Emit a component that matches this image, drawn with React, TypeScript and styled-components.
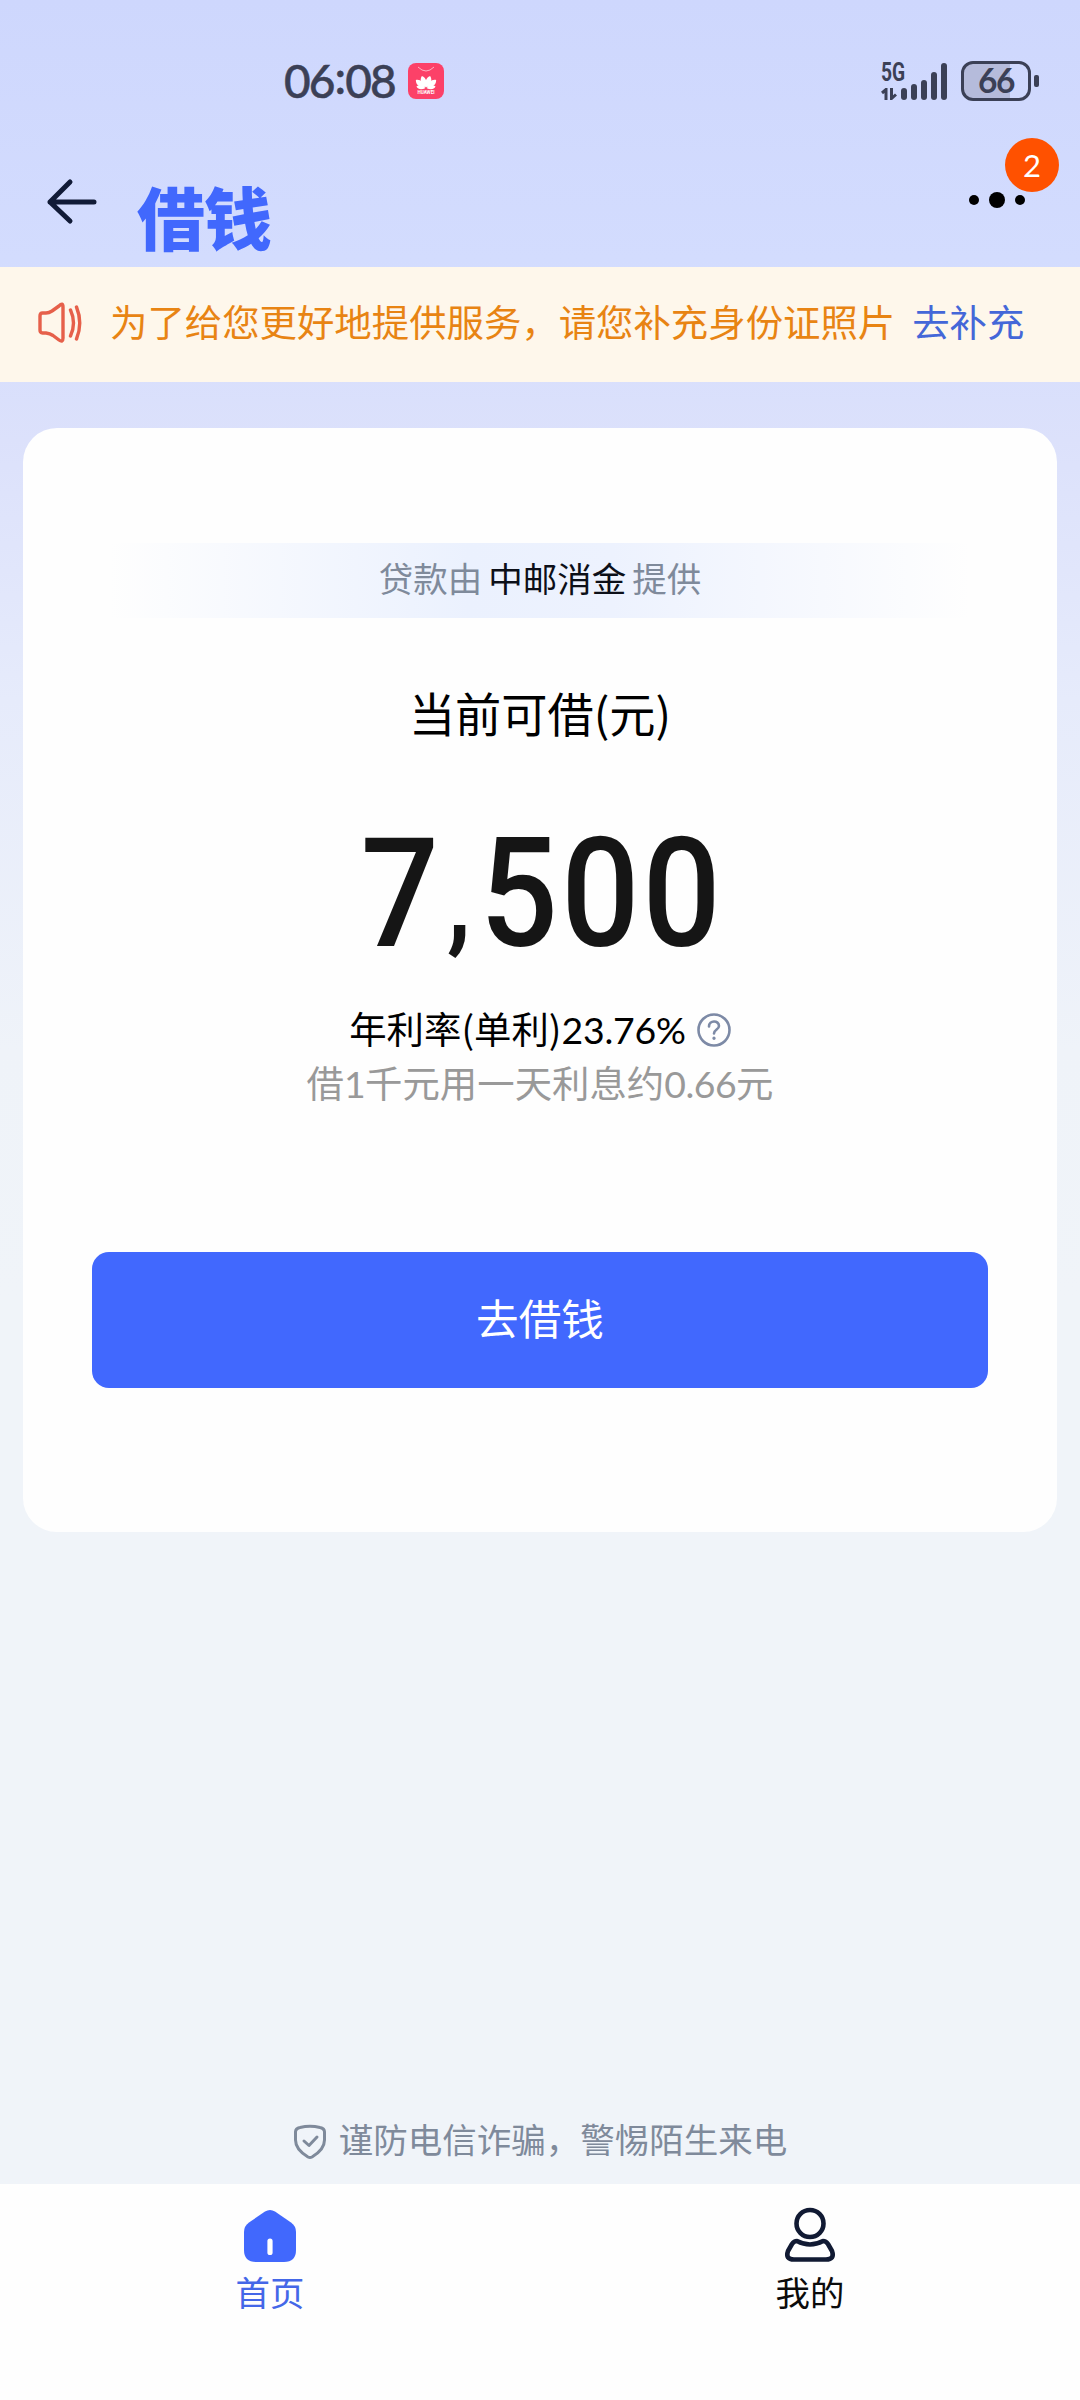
import React from 'react';
import styled, { createGlobalStyle } from 'styled-components';

const Global = createGlobalStyle`
  * { box-sizing: border-box; }
  body { margin: 0; background: #f0f4f9; }
`;

const Screen = styled.div`
  width: 1080px;
  height: 2400px;
  display: flex;
  flex-direction: column;
  overflow: hidden;
  background: linear-gradient(180deg, #ced7fd 0, #d3dcfe 260px, #dce1fb 440px, #e6ebfb 700px, #eff3f9 1050px, #f0f4f9 1300px);
  font-family: "Noto Sans CJK SC", sans-serif;
  color: #000;
`;

const StatusBar = styled.header`
  height: 160px;
  display: flex;
  align-items: center;
  justify-content: space-between;
  padding: 1px 41px 0 284px;
  color: #3b4056;
`;

const StatusGroup = styled.div<{ $gap: number }>`
  display: flex;
  align-items: center;
  gap: ${(p) => p.$gap}px;
`;

const Clock = styled.span`
  width: 112px;
  font: 500 46px/60px Lato, sans-serif;
  letter-spacing: -1.9px;
  white-space: nowrap;
  -webkit-text-stroke: 0.5px #3b4056;
`;

const Colon = styled.span`
  margin: 0 1px;
  vertical-align: 4px;
  line-height: 1;
`;

const Network = styled.div`
  display: flex;
  align-items: flex-end;
  height: 38px;
`;

const NetworkLabel = styled.div`
  display: flex;
  flex-direction: column;
  width: 20px;
  height: 37px;
  justify-content: space-between;
`;

const Generation = styled.span`
  font: 700 25px/20px Roboto, sans-serif;
  transform: scaleX(0.77);
  transform-origin: left;
`;

const Bars = styled.div`
  display: flex;
  align-items: flex-end;
  gap: 4px;
`;

const Bar = styled.i<{ $h: number }>`
  width: 6px;
  height: ${(p) => p.$h}px;
  border-radius: 3px;
  background: #3b4056;
`;

const Battery = styled.div`
  display: flex;
  align-items: center;
  gap: 3px;
`;

const BatteryShell = styled.div`
  width: 70px;
  height: 40px;
  display: flex;
  align-items: center;
  justify-content: center;
  padding-bottom: 1px;
  border: 3px solid #3b4056;
  border-radius: 12px;
  background: linear-gradient(90deg, #b5bbdb 0 46px, transparent 46px);
  font: 700 33.5px/34px Lato, sans-serif;
  letter-spacing: -1.4px;
`;

const BatteryTip = styled.i`
  width: 5px;
  height: 12px;
  border-radius: 2px;
  background: #3b4056;
`;

const NavBar = styled.nav`
  height: 107px;
  display: flex;
  align-items: flex-start;
  padding: 0 54px 0 46px;
`;

const BackIcon = styled.svg`
  margin-top: 18px;
  flex: none;
`;

const Title = styled.h1`
  margin: 11px 0 0 39px;
  font-size: 68px;
  line-height: 90px;
  font-weight: 900;
  letter-spacing: -1px;
  color: #4168fd;
`;

const More = styled.div`
  position: relative;
  display: flex;
  align-items: center;
  gap: 10px;
  height: 16px;
  margin: 32px -20px 0 auto;
  padding-right: 21px;
`;

const Dot = styled.i<{ $size: number }>`
  width: ${(p) => p.$size}px;
  height: ${(p) => p.$size}px;
  border-radius: 50%;
  background: #000;
`;

const Badge = styled.span`
  position: absolute;
  right: -13px;
  bottom: 16px;
  width: 54px;
  height: 54px;
  border-radius: 50%;
  background: #ff5100;
  color: #fff;
  text-align: center;
  font: 400 31px/54px Lato, sans-serif;
`;

const Notice = styled.section`
  height: 115px;
  display: flex;
  align-items: center;
  padding: 0 0 7px 38px;
  background: #fef7eb;
  font-size: 37.4px;
  line-height: 56px;
  white-space: nowrap;
`;

const NoticeIcon = styled.svg`
  margin-top: 3px;
`;

const NoticeText = styled.span`
  margin-left: 28px;
  color: #e88413;
`;

const NoticeLink = styled.a`
  margin-left: 17px;
  color: #4467d8;
`;

const Card = styled.main`
  height: 1104px;
  margin: 46px 23px 0;
  padding: 115px 69px 0;
  display: flex;
  flex-direction: column;
  align-items: center;
  border-radius: 34px;
  background: #fefefe;
`;

const Provider = styled.div`
  width: 100%;
  height: 75px;
  display: flex;
  justify-content: center;
  gap: 6px;
  font-size: 34.5px;
  line-height: 69px;
  color: #7f8a9b;
  background: linear-gradient(90deg, rgba(235, 241, 254, 0) 2%, #ebf1fe 42%, #edf2fe 58%, rgba(235, 241, 254, 0) 98%);
`;

const ProviderName = styled.span`
  color: #0c0f18;
`;

const AmountLabel = styled.h2`
  margin: 61px 0 0;
  font-size: 46.2px;
  line-height: 66px;
  font-weight: 400;
`;

const Amount = styled.div`
  margin-top: 82px;
  height: 134px;
  padding-left: 6px;
  font: 500 152px/134px Roboto, sans-serif;
  letter-spacing: 3.6px;
  color: #151515;
  transform: scaleX(0.905);
`;

const Comma = styled.span`
  margin: 0 6px 0 5px;
  font-size: 120px;
  line-height: 1;
  vertical-align: 7px;
`;

const Rate = styled.div`
  height: 56px;
  display: flex;
  align-items: center;
  gap: 11px;
  margin-top: 39px;
  font-size: 37.4px;
  line-height: 56px;
`;

const HelpIcon = styled.svg`
  margin-top: 3px;
`;

const Num = styled.span<{ $tight?: boolean }>`
  font-family: Lato, sans-serif;
  line-height: 1;
  letter-spacing: ${(p) => (p.$tight ? -0.5 : -0.2)}px;
`;

const Hint = styled.p`
  margin: -1px 0 0;
  height: 54px;
  font-size: 37.4px;
  line-height: 54px;
  color: #999;
`;

const BorrowButton = styled.button`
  width: 896px;
  height: 136px;
  margin-top: 143px;
  padding: 0 0 7px;
  border: 0;
  border-radius: 17px;
  background: #4168fe;
  color: #fff;
  font: 400 42.6px/60px "Noto Sans CJK SC", sans-serif;
`;

const Warning = styled.footer`
  margin-top: auto;
  height: 84px;
  display: flex;
  justify-content: center;
  gap: 12px;
  font-size: 34.5px;
  line-height: 76px;
  color: #7f8a9b;
`;

const ShieldIcon = styled.svg`
  margin-top: 24px;
`;

const TabBar = styled.nav`
  height: 216px;
  display: grid;
  grid-template-columns: 1fr 1fr;
  background: #fefefe;
`;

const Tab = styled.a<{ $active?: boolean }>`
  display: flex;
  flex-direction: column;
  align-items: center;
  padding-top: 23px;
  gap: 3px;
  font-size: 34.4px;
  line-height: 50px;
  color: ${(p) => (p.$active ? '#4467e8' : '#0b0b0b')};
`;

const signal = [12, 16, 20, 28, 37];

export default function App() {
  return (
    <Screen>
      <Global />
      <StatusBar>
        <StatusGroup $gap={12}>
          <Clock>06<Colon>:</Colon>08</Clock>
          <svg width="36" height="36" viewBox="0 0 36 36">
            <rect width="36" height="36" rx="8" fill="#fc4168" />
            <path d="M10 4q8 8 16 0" fill="none" stroke="#ffb3c2" strokeWidth="1" />
            <g fill="#fff" transform="translate(18 25.500)">
              {[-78, -50, -18, 18, 50, 78].map((a) => (
                <path key={a} d="M0 -1C-3.200 -6 -3.600 -10 0 -13C3.600 -10 3.200 -6 0 -1Z" transform={`rotate(${a}) scale(${Math.abs(a) > 60 ? 0.75 : 1.02})`} />
              ))}
            </g>
            <text x="18" y="31" fill="#fff" fontSize="4.6" fontWeight="700" textAnchor="middle" fontFamily="Roboto, sans-serif">HUAWEI</text>
          </svg>
        </StatusGroup>
        <StatusGroup $gap={14}>
          <Network>
            <NetworkLabel>
              <Generation>5G</Generation>
              <svg width="16" height="12" viewBox="0 0 16 12" fill="none" stroke="#3b4056" strokeWidth="3">
                <path d="M1 5L5 1.5V12M10.500 0V10.500L15 6.500" />
              </svg>
            </NetworkLabel>
            <Bars>
              {signal.map((h) => (
                <Bar key={h} $h={h} />
              ))}
            </Bars>
          </Network>
          <Battery>
            <BatteryShell>66</BatteryShell>
            <BatteryTip />
          </Battery>
        </StatusGroup>
      </StatusBar>
      <NavBar>
        <BackIcon width="52" height="48" viewBox="0 0 52 48" fill="none" stroke="#111b37" strokeWidth="5" strokeLinecap="round" strokeLinejoin="round">
          <path d="M24 4L4 24L24 43M4 24H48" />
        </BackIcon>
        <Title>借钱</Title>
        <More>
          <Dot $size={10} />
          <Dot $size={16} />
          <Dot $size={10} />
          <Badge>2</Badge>
        </More>
      </NavBar>
      <Notice>
        <NoticeIcon width="44" height="42" viewBox="0 0 44 42" fill="none" stroke="#e6604a" strokeWidth="3.400" strokeLinecap="round" strokeLinejoin="round">
          <path d="M4.500 11H8Q11 11 14 9L21 4Q25 0 25 5V36Q25 41 21 38L15 33.500Q12 31.500 8 31H4.500Q2 31 2 28V14Q2 11 4.500 11Z" />
          <path d="M32.500 8Q38.500 21 32.500 34M38.500 5Q45 21 38.500 37" />
        </NoticeIcon>
        <NoticeText>为了给您更好地提供服务，请您补充身份证照片</NoticeText>
        <NoticeLink>去补充</NoticeLink>
      </Notice>
      <Card>
        <Provider>
          <span>贷款由</span>
          <ProviderName>中邮消金</ProviderName>
          <span>提供</span>
        </Provider>
        <AmountLabel>当前可借(元)</AmountLabel>
        <Amount>
          7<Comma>,</Comma>500
        </Amount>
        <Rate>
          <span>年利率(单利)<Num>23.76%</Num></span>
          <HelpIcon width="34" height="34" viewBox="0 0 34 34" fill="none" stroke="#7d8aa6" strokeWidth="2.600" strokeLinecap="round">
            <circle cx="17" cy="17" r="15.500" />
            <path d="M12 13.500C12 7 22 7 22 13C22 16.500 17 16.500 17 20.500" />
            <path d="M17 25V25.300" strokeWidth="3.200" />
          </HelpIcon>
        </Rate>
        <Hint>借<Num $tight>1</Num>千元用一天利息约<Num $tight>0.66</Num>元</Hint>
        <BorrowButton>去借钱</BorrowButton>
      </Card>
      <Warning>
        <ShieldIcon width="34" height="36" viewBox="0 0 34 36" fill="none" stroke="#7f8a9b" strokeWidth="3" strokeLinecap="round" strokeLinejoin="round">
          <path d="M7 3.500Q17 1 27 3.500Q31.500 4.500 31.500 8V16C31.500 25 24 30 19 33Q17 34 15 33C10 30 2.500 25 2.500 16V8Q2.500 4.500 7 3.500Z" />
          <path d="M11 17L16 21.500L24 13" />
        </ShieldIcon>
        <span>谨防电信诈骗，警惕陌生来电</span>
      </Warning>
      <TabBar>
        <Tab $active>
          <svg width="54" height="56" viewBox="0 0 54 56">
            <path d="M22 4.500Q27 1.500 32 4.500L48 15.500Q53 19 53 25V43Q53 55 41 55H13Q1 55 1 43V25Q1 19 6 15.500Z" fill="#4168fd" />
            <path d="M27 34V45.500" stroke="#fff" strokeWidth="5.200" strokeLinecap="round" />
          </svg>
          首页
        </Tab>
        <Tab>
          <svg width="54" height="56" viewBox="0 0 54 56" fill="none" stroke="#111a33" strokeWidth="4.600" strokeLinejoin="round">
            <circle cx="27" cy="16.500" r="13.500" />
            <path d="M14 34Q27 41 40 34Q43 34 45 37L49 44Q52 52.500 43 52.500H11Q2 52.500 5 44L9 37Q11 34 14 34Z" />
          </svg>
          我的
        </Tab>
      </TabBar>
    </Screen>
  );
}
